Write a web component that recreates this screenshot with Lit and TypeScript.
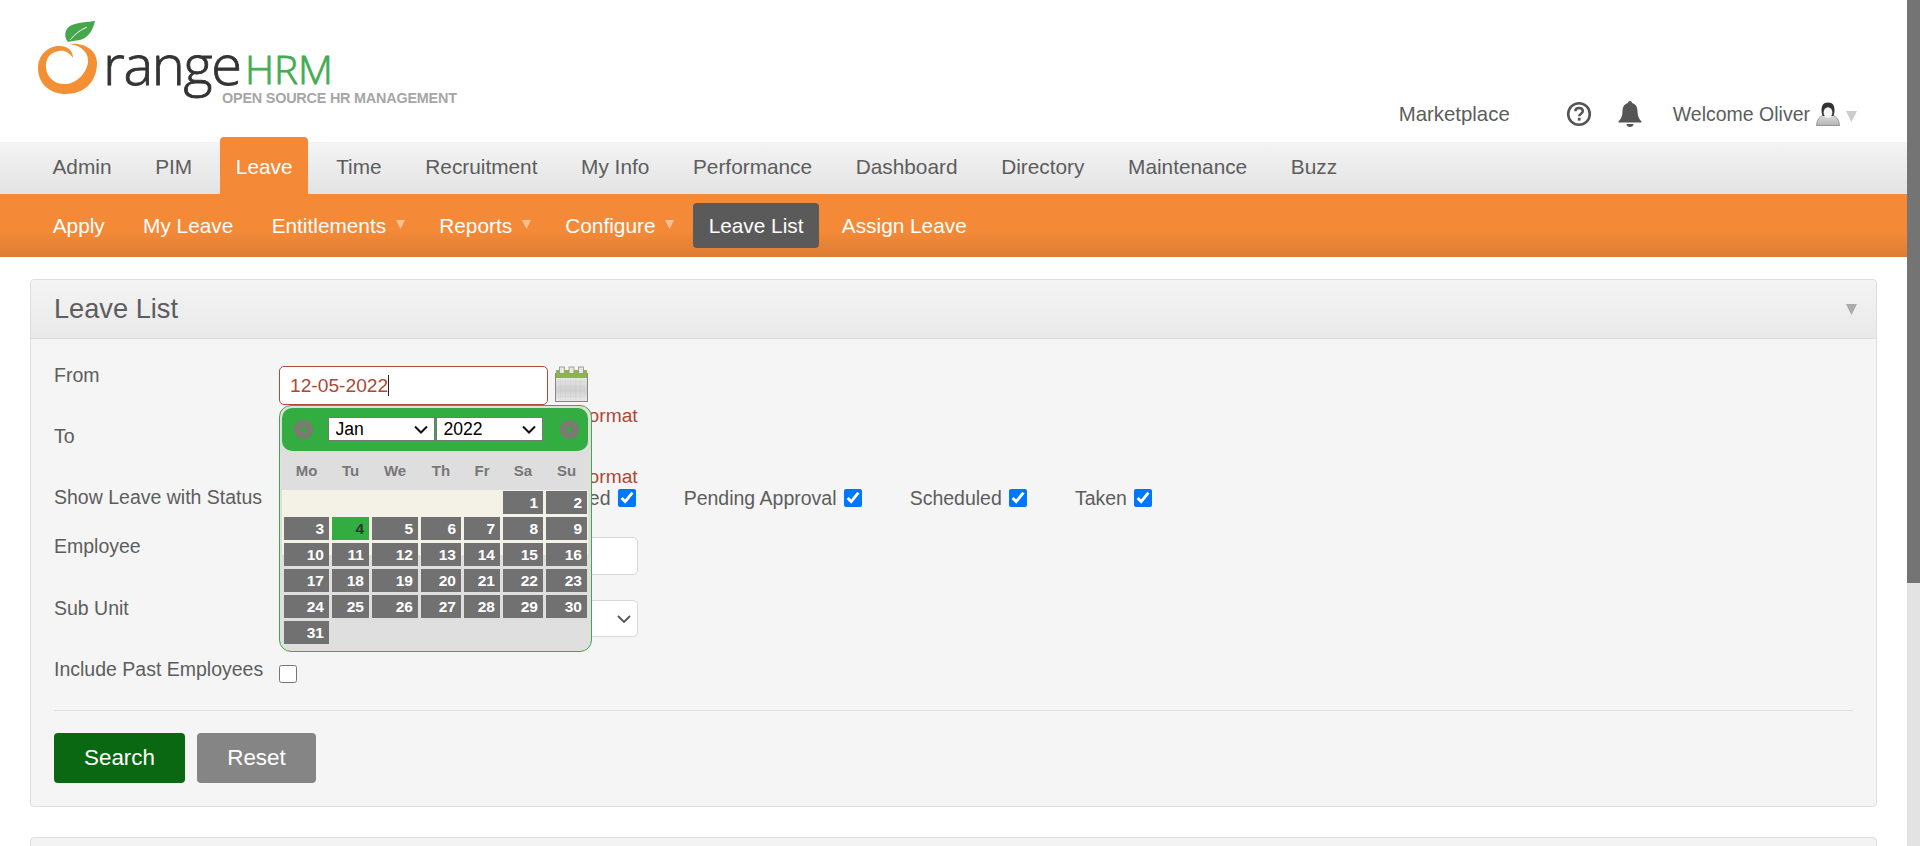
import { LitElement, html, css, svg } from "lit";
import { customElement } from "lit/decorators.js";

const mainMenu = ["Admin","PIM","Leave","Time","Recruitment","My Info","Performance","Dashboard","Directory","Maintenance","Buzz"];
const subMenu: [string, boolean, boolean][] = [
  ["Apply",false,false],["My Leave",false,false],["Entitlements",true,false],["Reports",true,false],
  ["Configure",true,false],["Leave List",false,true],["Assign Leave",false,false],
];
const weekdays = ["Mo","Tu","We","Th","Fr","Sa","Su"];
const statuses = ["All","Rejected","Cancelled","Pending Approval","Scheduled","Taken"];

const logo = svg`
<svg class="logo" width="470" height="142" viewBox="0 0 470 142">
  <path fill="#f39034" d="M69,44 C81,42 97,48 97,63 C97,82 84,94 66,94 C50,94 38,84 38,68 C38,54 50,45 60,46 C67,46 73,50 73,58 C69,52 64,50 59,51 C50,52 45,59 46,68 C47,78 56,85 66,84 C78,83 87,72 88,62 C89,52 80,45 69,44 Z"/>
  <path fill="#45a64a" d="M68,42 C63,36 65,28 72,25 C80,22 88,22 95,21 C93,30 88,38 80,40 C75,41 71,41 68,42 Z"/>
  <path d="M70,40 C75,34 80,30 87,27" stroke="#fff" stroke-width="1" fill="none"/>
  <text x="103" y="85" class="lg-range" textLength="139" lengthAdjust="spacing">range</text>
  <text x="245" y="84" class="lg-hrm" textLength="88" lengthAdjust="spacingAndGlyphs">HRM</text>
  <text x="222" y="102.5" class="lg-tag" textLength="235" lengthAdjust="spacing">OPEN SOURCE HR MANAGEMENT</text>
</svg>`;

const caret = svg`<svg width="11" height="11" viewBox="0 0 11 11"><path d="M0 0H11L5.5 11Z" fill="currentColor"/></svg>`;
const smallCaret = svg`<svg width="9" height="9" viewBox="0 0 9 9"><path d="M0 0H9L4.5 9Z" fill="currentColor"/></svg>`;
const chevron = svg`<svg class="chev" width="14" height="9" viewBox="0 0 14 9"><path d="M1 1.5 L7 7.5 L13 1.5" fill="none" stroke="#111" stroke-width="2"/></svg>`;

const helpIcon = svg`<svg width="26" height="26" viewBox="0 0 26 26">
  <circle cx="13" cy="13" r="10.8" fill="none" stroke="#555" stroke-width="2.6"/>
  <path d="M9.3 10.3 C9.4 8 11 7 13 7 C15.2 7 16.8 8.3 16.8 10.2 C16.8 12.6 13.2 12.8 13.2 15.2" fill="none" stroke="#555" stroke-width="2.5"/>
  <rect x="11.8" y="16.8" width="2.8" height="2.8" fill="#555"/></svg>`;

const bellIcon = svg`<svg width="24" height="26" viewBox="0 0 24 26">
  <path fill="#555" d="M12 0 C13.2 0 14 .8 14 2 C18 3 19.5 6.5 19.5 10 C19.5 15 21 18 23.5 20.5 V21.5 H.5 V20.5 C3 18 4.5 15 4.5 10 C4.5 6.5 6 3 10 2 C10 .8 10.8 0 12 0 Z"/>
  <path fill="#555" d="M8.5 23 H15.5 C15.5 25 14 26 12 26 C10 26 8.5 25 8.5 23 Z"/></svg>`;

const userIcon = svg`<svg width="24" height="24" viewBox="0 0 24 24">
  <defs><linearGradient id="tor" x1="0" y1="0" x2="0" y2="1"><stop offset="0" stop-color="#dedede"/><stop offset="1" stop-color="#b4b4b4"/></linearGradient></defs>
  <path fill="url(#tor)" stroke="#8f8f8f" stroke-width=".9" d="M.5 23.5 C1 18 3 15 7.5 13 H16.5 C21 15 23 18 23.5 23.5 Z"/>
  <path fill="#333" d="M12 .5 C17 .5 18.5 4 18.5 8 C18.5 11 18 13 17 14 H7 C6 13 5.5 11 5.5 8 C5.5 4 7 .5 12 .5 Z"/>
  <ellipse cx="12" cy="10.5" rx="4.4" ry="5.2" fill="#f4f4f4"/></svg>`;

const calIcon = svg`<svg class="cal" width="33" height="36" viewBox="0 0 33 36">
  <defs><linearGradient id="calb" x1="0" y1="0" x2="0" y2="1"><stop offset="0" stop-color="#eeeeee"/><stop offset=".6" stop-color="#d0d0d0"/><stop offset="1" stop-color="#e8e8e8"/></linearGradient>
  <pattern id="calg" width="5" height="5" patternUnits="userSpaceOnUse"><path d="M0 0H5M0 0V5" stroke="#c4c4c4" stroke-width=".6"/></pattern></defs>
  <rect x=".5" y="7.5" width="32" height="28" fill="url(#calb)" stroke="#868686"/>
  <rect x="3" y="13" width="27" height="20" fill="url(#calg)"/>
  <rect x="1" y="4" width="31" height="8" fill="#8cb54a"/>
  <g fill="#e6e6e6" stroke="#8f8f8f" stroke-width=".8"><rect x="4.5" y="1" width="5" height="6.5"/><rect x="14" y="1" width="5" height="6.5"/><rect x="23.5" y="1" width="5" height="6.5"/></g>
</svg>`;

const navBtn = (right: boolean) => svg`<svg width="19" height="19" viewBox="0 0 19 19">
  <circle cx="9.5" cy="9.5" r="9.5" fill="#7b7b72"/>
  <path d="${right ? "M7.5 5 L12.5 9.5 L7.5 14 Z" : "M11.5 5 L6.5 9.5 L11.5 14 Z"}" fill="#33ac42"/></svg>`;

@customElement("app-root")
export class AppRoot extends LitElement {
  static styles = css`
    :host { display: flex; width: 1920px; height: 846px; overflow: hidden; background: #fff;
      font-family: "Liberation Sans", Arial, sans-serif; color: #5d5d5d; }
    * { box-sizing: border-box; }
    .page { width: 1907px; flex: none; height: 846px; overflow: hidden; }
    .sb { flex: 1; background: #e3e3e3; }
    .sb-thumb { height: 583px; background: #747474; }

    .top { height: 142px; position: relative; display: flex; }
    .logo { display: block; flex: none; }
    .lg-range { font-family: "Open Sans", sans-serif; font-weight: 300; font-size: 56px; fill: #333; stroke: #333; stroke-width: .8px; }
    .lg-hrm { font-family: "Open Sans", sans-serif; font-weight: 300; font-size: 39px; fill: #43ac50; stroke: #43ac50; stroke-width: .8px; }
    .lg-tag { font-family: "Liberation Sans", sans-serif; font-weight: 700; font-size: 14.4px; fill: #a6a6a6; }
    .top-r { margin-left: auto; display: flex; align-items: center; height: 24px; margin-top: 102px; padding-right: 50px; }
    .mkt { font-size: 20.4px; margin-right: 56px; }
    .help { display: flex; margin-right: 26px; }
    .bell { display: flex; margin-right: 31px; }
    .welcome { font-size: 19.5px; margin-right: 6px; }
    .uarrow { display: flex; color: #ccc; margin-left: 6px; margin-top: 5px; }

    .menu { height: 52px; background: linear-gradient(#f4f4f4, #e3e3e3); display: flex; gap: 12.7px; padding-left: 37px; font-size: 20.8px; }
    .menu a { padding: 0 15.5px; height: 52px; line-height: 50px; color: #5d5d5d; }
    .menu a.on { background: #f48a38; color: #fff; margin-top: -5px; height: 57px; line-height: 60px; border-radius: 4px 4px 0 0; }

    .sub { height: 63px; background: linear-gradient(#f48a38 0, #f48a38 58%, #dc7d33 100%); display: flex; gap: 8px; padding: 9px 0 0 37.5px; font-size: 20.8px; color: #fff; }
    .sub a { height: 45px; line-height: 46px; padding: 0 15.2px; position: relative; }
    .sub a.dd { padding-right: 30px; }
    .sub a.on { background: #5a5a5a; border-radius: 4px; }
    .sub .ar { position: absolute; right: 11px; top: 17px; display: flex; color: #f9c197; }

    .panel { margin: 22px 30px 0 30px; border: 1px solid #dedede; border-radius: 4px; background: #f5f5f5; }
    .phead { height: 59px; background: linear-gradient(#f4f4f4, #e9e9e9); border-bottom: 1px solid #dcdcdc; border-radius: 4px 4px 0 0;
      display: flex; align-items: center; justify-content: space-between; padding: 0 19px 0 23px; font-size: 27.2px; }
    .parrow { display: flex; color: #aaa; }
    .pbody { padding: 27px 23px 23px 23px; }
    .form { display: grid; grid-template-columns: 225px 1fr; grid-template-rows: 61px 61px 49px 63px 59px 51px; position: relative; }
    .lbl { font-size: 19.5px; line-height: 19px; white-space: nowrap; }
    .lbl.up { margin-top: -1px; }
    .lbl.down { margin-top: 1px; }
    .field { position: relative; }
    .inp { display: block; width: 269px; height: 39px; border: 1px solid #b04a3c; border-radius: 5px; background: #fff;
      font: 19.2px "Liberation Sans", sans-serif; color: #aa4935; padding: 0 10px; line-height: 37px; }
    .tcaret { display: inline-block; width: 1px; height: 21px; background: #222; vertical-align: -4px; }
    .dr { display: flex; gap: 7px; }
    .err { font-size: 19.2px; word-spacing: -3px; color: #aa4935; line-height: 22px; white-space: nowrap; }
    .plain { border-color: #d8d8d8; width: 359px; height: 38px; }
    .plainsel { width: 359px; height: 37px; border: 1px solid #d8d8d8; border-radius: 5px; background: #fff; display: flex; align-items: center; justify-content: flex-end; padding-right: 5px; }
    .st { display: flex; gap: 48px; height: 18px; margin-top: 1px; font-size: 19.5px; line-height: 18px; }
    .st label { display: flex; gap: 7.5px; align-items: center; white-space: nowrap; }
    .chk { appearance: auto; width: 17.6px; height: 17.6px; margin: 0; accent-color: #0075ff; display: block; flex: none; }
    .lastchk { margin-top: 6px; }
    .rule { height: 1px; background: #dfdfdf; margin-bottom: 22px; }
    .btns { display: flex; gap: 12px; }
    .btn { height: 50px; border: 0; border-radius: 4px; color: #fff; font: 22.4px "Liberation Sans", sans-serif; padding: 0; }
    .search { width: 131px; background: #0a6712; }
    .reset { width: 119px; background: #858585; }
    .next { margin: 30px 30px 0; height: 40px; border: 1px solid #dedede; border-radius: 4px; background: #f3f3f3; }

    .dp { position: absolute; left: 225px; top: 39px; width: 313px; height: 247px; border: 1px solid #3fa94a; border-radius: 12px;
      background: #dfdfdf; padding: 2px; z-index: 5; }
    .dp-h { height: 43px; width: 306px; background: #33ac42; border-radius: 10px; display: flex; align-items: center; }
    .dp-h svg { display: block; flex: none; }
    .nb1 { margin-left: 11.5px; }
    .nb2 { margin-left: 16px; }
    .sw { position: relative; display: block; width: 107px; height: 24px; margin-right: 1px; margin-bottom: 1px; }
    .sw1 { margin-left: 15px; }
    .dp-h select { appearance: none; display: block; width: 107px; height: 24px; font: 17.6px "Liberation Sans", sans-serif; background: #fff; border: 1px solid #777; border-radius: 0; color: #000; padding: 0 0 0 7px; }
    .dp-h .chev { position: absolute; right: 7px; top: 8px; pointer-events: none; }
    .dp-w { display: grid; grid-template-columns: 45px 37px 46px 40px 36px 40px 41px; column-gap: 3px; height: 39px; width: 306px; padding-left: 2px; background: #dedede; align-items: center;
      font-size: 15px; font-weight: 700; color: #777; text-align: center; }
    .dp-b { position: relative; width: 306px; padding: 1px 0 0 2px; display: grid; grid-template-columns: 45px 37px 46px 40px 36px 40px 41px; gap: 3px; grid-auto-rows: 23px; }
    .cream { position: absolute; left: 0; top: 0; width: 306px; height: 65px; background: #f4f1e6; }
    .c { position: relative; background: #717171; color: #fff; font-size: 15.5px; font-weight: 700; text-align: right; padding-right: 5px; line-height: 24px; }
    .c.t { background: #33ac42; color: #333; }
    .c.blank { background: none; }
  `;

  render() {
    const cells: unknown[] = [];
    for (let i = 0; i < 5; i++) cells.push(html`<div class="c blank"></div>`);
    for (let d = 1; d <= 31; d++) cells.push(html`<div class="c ${d === 4 ? "t" : ""}">${d}</div>`);
    return html`
      <div class="page">
        <div class="top">
          ${logo}
          <div class="top-r">
            <span class="mkt">Marketplace</span>
            <span class="help">${helpIcon}</span>
            <span class="bell">${bellIcon}</span>
            <span class="welcome">Welcome Oliver</span>
            ${userIcon}
            <span class="uarrow">${caret}</span>
          </div>
        </div>
        <nav class="menu">${mainMenu.map(m => html`<a class="${m === "Leave" ? "on" : ""}">${m}</a>`)}</nav>
        <nav class="sub">${subMenu.map(([t, dd, on]) => html`<a class="${dd ? "dd" : ""} ${on ? "on" : ""}">${t}${dd ? html`<span class="ar">${smallCaret}</span>` : ""}</a>`)}</nav>
        <section class="panel">
          <div class="phead"><span>Leave List</span><span class="parrow">${caret}</span></div>
          <div class="pbody">
            <div class="form">
              <div class="lbl">From</div>
              <div class="field">
                <div class="dr"><div class="inp">12-05-2022<span class="tcaret"></span></div>${calIcon}</div>
                <div class="err">Should be a valid date in dd-mm-yyyy format</div>
              </div>
              <div class="lbl">To</div>
              <div class="field">
                <div class="inp">12-05-2022</div>
                <div class="err">Should be a valid date in dd-mm-yyyy format</div>
              </div>
              <div class="lbl">Show Leave with Status</div>
              <div class="st">${statuses.map(s => html`<label>${s}<input class="chk" type="checkbox" checked /></label>`)}</div>
              <div class="lbl">Employee</div>
              <div><div class="inp plain"></div></div>
              <div class="lbl up">Sub Unit</div>
              <div><div class="plainsel"><svg width="16" height="10" viewBox="0 0 16 10"><path d="M2 2 L8 8 L14 2" fill="none" stroke="#555" stroke-width="1.8"/></svg></div></div>
              <div class="lbl down">Include Past Employees</div>
              <div><input class="chk lastchk" type="checkbox" /></div>

              <div class="dp">
                <div class="dp-h">
                  <span class="nb1">${navBtn(false)}</span>
                  <span class="sw sw1"><select><option>Jan</option></select>${chevron}</span>
                  <span class="sw"><select><option>2022</option></select>${chevron}</span>
                  <span class="nb2">${navBtn(true)}</span>
                </div>
                <div class="dp-w">${weekdays.map(w => html`<span>${w}</span>`)}</div>
                <div class="dp-b"><div class="cream"></div>${cells}</div>
              </div>
            </div>
            <div class="rule"></div>
            <div class="btns"><button class="btn search">Search</button><button class="btn reset">Reset</button></div>
          </div>
        </section>
        <div class="next"></div>
      </div>
      <div class="sb"><div class="sb-thumb"></div></div>
    `;
  }
}
